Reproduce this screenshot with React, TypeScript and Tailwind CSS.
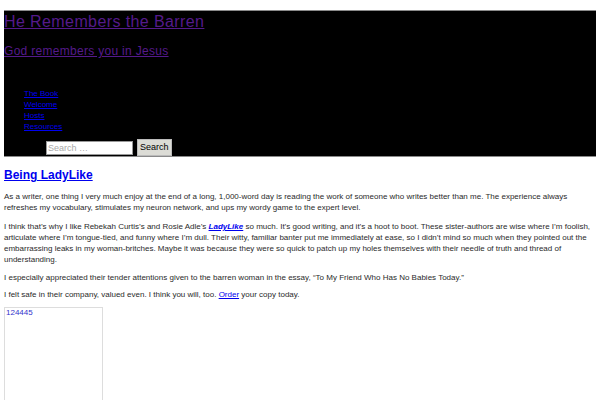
export default function App() {
  const f = { fontFamily: '"Liberation Sans", Arial, sans-serif' };
  return (
    <div className="bg-white min-h-[400px] px-[4px] pt-[10px]" style={f}>
      <header className="bg-black border-y border-[#8a8a8a]">
        <h1 className="text-[16px] leading-[20px] pt-[1px] m-0 tracking-[0.4px]">
          <a href="#" className="text-[#551a8b] underline">He Remembers the Barren</a>
        </h1>
        <h2 className="text-[12px] leading-[16px] mt-[11px] tracking-[0.3px]">
          <a href="#" className="text-[#551a8b] underline">God remembers you in Jesus</a>
        </h2>
        <ul className="mt-[29px] pl-[20px] text-[8px] leading-[11px]">
          <li><a href="#" className="text-[#0000ee] underline">The Book</a></li>
          <li><a href="#" className="text-[#0000ee] underline">Welcome</a></li>
          <li><a href="#" className="text-[#0000ee] underline">Hosts</a></li>
          <li><a href="#" className="text-[#0000ee] underline">Resources</a></li>
        </ul>
        <div className="flex items-center gap-[4px] pl-[42px] mt-[7px]">
          <input
            placeholder="Search …"
            className="w-[87px] h-[14px] bg-white border border-[#999] text-[9px] px-[1px] placeholder:text-[#aaa] outline-none"
          />
          <button className="h-[17px] px-[2px] bg-[#dcdcd6] border border-[#bbb] text-[9px] text-black">Search</button>
        </div>
      </header>
      <article className="text-[#2a2a2a] text-[8px] leading-[11px]">
        <h2 className="text-[12px] font-bold leading-[14px] mt-[11px]">
          <a href="#" className="text-[#0000ee] underline">Being LadyLike</a>
        </h2>
        <p className="mt-[9px]">As a writer, one thing I very much enjoy at the end of a long, 1,000-word day is reading the work of someone who writes better than me. The experience always refreshes my vocabulary, stimulates my neuron network, and ups my wordy game to the expert level.</p>
        <p className="mt-[8px]">I think that’s why I like Rebekah Curtis’s and Rosie Adle’s <a href="#" className="text-[#0000ee] underline font-bold italic">LadyLike</a> so much. It’s good writing, and it’s a hoot to boot. These sister-authors are wise where I’m foolish, articulate where I’m tongue-tied, and funny where I’m dull. Their witty, familiar banter put me immediately at ease, so I didn’t mind so much when they pointed out the embarrassing leaks in my woman-britches. Maybe it was because they were so quick to patch up my holes themselves with their needle of truth and thread of understanding.</p>
        <p className="mt-[7px]">I especially appreciated their tender attentions given to the barren woman in the essay, “To My Friend Who Has No Babies Today.”</p>
        <p className="mt-[6px]">I felt safe in their company, valued even. I think you will, too. <a href="#" className="text-[#0000ee] underline">Order</a> your copy today.</p>
        <div className="mt-[7px] w-[99px] h-[98px] border border-[#ddd] px-[1px] text-[#3333cc] text-[8px] leading-[10px]">124445</div>
      </article>
    </div>
  );
}
